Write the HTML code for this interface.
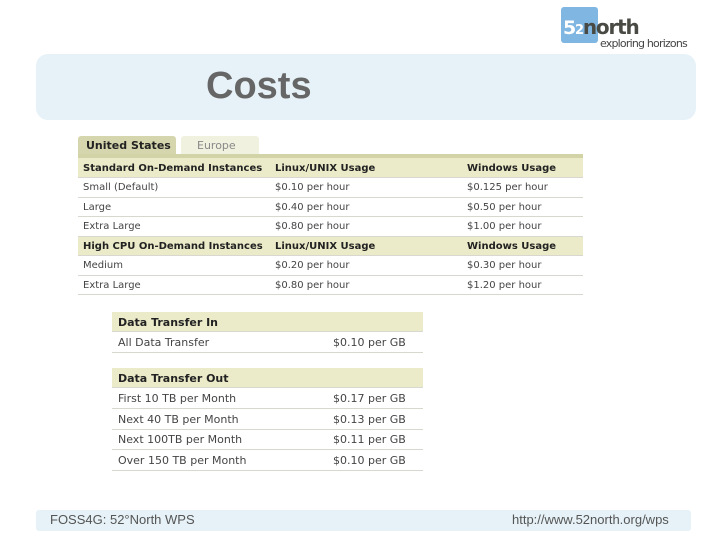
<!DOCTYPE html>
<html><head><meta charset="utf-8"><style>
*{margin:0;padding:0;box-sizing:border-box}
body{width:720px;height:540px;background:#fff;position:relative;overflow:hidden;font-family:"DejaVu Sans",Verdana,sans-serif}
.abs{position:absolute}
.band{background:#e6f2f7}
.t{position:absolute;font-size:10px;color:#444;white-space:nowrap}
.r{position:absolute;border-bottom:1px solid #d8d8d0}
.h{background:#ecebc9}
.b{font-weight:bold;color:#222}
</style></head><body>
<div class="abs" style="left:561px;top:7px;width:37px;height:36px;background:#7fb6e2;border-radius:3px"></div>
<div class="abs" style="left:563px;top:15px;font:bold 19px 'DejaVu Sans',sans-serif;color:#fff;letter-spacing:-1.2px">5<span style="font-size:13px">2</span><span style="color:#4a4a44;font-size:20px">north</span></div>
<div class="abs" style="left:600px;top:37px;font:11px 'DejaVu Sans',sans-serif;color:#444;letter-spacing:-0.8px">exploring horizons</div>

<div class="abs band" style="left:36px;top:54px;width:660px;height:66px;border-radius:12px"></div>
<div class="abs" style="left:206px;top:65px;font:bold 38px 'Liberation Sans',sans-serif;color:#666">Costs</div>

<div class="abs" style="left:78px;top:136px;width:98px;height:20px;background:#d6d6ae;border-radius:3px 3px 0 0"></div>
<div class="t b" style="left:86px;top:139px;font-size:11px">United States</div>
<div class="abs" style="left:181px;top:136px;width:78px;height:20px;background:#f1f1df;border-radius:3px 3px 0 0"></div>
<div class="t" style="left:197px;top:139px;font-size:11px;color:#888">Europe</div>
<div class="abs" style="left:78px;top:154px;width:505px;height:4px;background:#d3d3a8"></div>

<div class="r h" style="left:78px;top:158px;width:505px;height:20px"></div>
<div class="r" style="left:78px;top:178px;width:505px;height:19.5px"></div>
<div class="r" style="left:78px;top:197.5px;width:505px;height:19.5px"></div>
<div class="r" style="left:78px;top:217px;width:505px;height:19.5px"></div>
<div class="r h" style="left:78px;top:236.5px;width:505px;height:19.5px"></div>
<div class="r" style="left:78px;top:256px;width:505px;height:19.5px"></div>
<div class="r" style="left:78px;top:275.5px;width:505px;height:19.5px"></div>

<div class="t b" style="left:83px;top:163px">Standard On-Demand Instances</div>
<div class="t b" style="left:275px;top:163px">Linux/UNIX Usage</div>
<div class="t b" style="left:467px;top:163px">Windows Usage</div>
<div class="t" style="left:83px;top:182px">Small (Default)</div><div class="t" style="left:275px;top:182px">$0.10 per hour</div><div class="t" style="left:467px;top:182px">$0.125 per hour</div>
<div class="t" style="left:83px;top:202px">Large</div><div class="t" style="left:275px;top:202px">$0.40 per hour</div><div class="t" style="left:467px;top:202px">$0.50 per hour</div>
<div class="t" style="left:83px;top:221px">Extra Large</div><div class="t" style="left:275px;top:221px">$0.80 per hour</div><div class="t" style="left:467px;top:221px">$1.00 per hour</div>
<div class="t b" style="left:83px;top:241px">High CPU On-Demand Instances</div>
<div class="t b" style="left:275px;top:241px">Linux/UNIX Usage</div>
<div class="t b" style="left:467px;top:241px">Windows Usage</div>
<div class="t" style="left:83px;top:260px">Medium</div><div class="t" style="left:275px;top:260px">$0.20 per hour</div><div class="t" style="left:467px;top:260px">$0.30 per hour</div>
<div class="t" style="left:83px;top:280px">Extra Large</div><div class="t" style="left:275px;top:280px">$0.80 per hour</div><div class="t" style="left:467px;top:280px">$1.20 per hour</div>

<div class="r h" style="left:112px;top:312px;width:311px;height:20px"></div>
<div class="r" style="left:112px;top:332px;width:311px;height:21px"></div>
<div class="t b" style="left:118px;top:316px;font-size:11px">Data Transfer In</div>
<div class="t" style="left:118px;top:336px;font-size:11px">All Data Transfer</div>
<div class="t" style="left:333px;top:336px;font-size:11px">$0.10 per GB</div>

<div class="r h" style="left:112px;top:368px;width:311px;height:20px"></div>
<div class="r" style="left:112px;top:388px;width:311px;height:21px"></div>
<div class="r" style="left:112px;top:409px;width:311px;height:20.5px"></div>
<div class="r" style="left:112px;top:429.5px;width:311px;height:20.5px"></div>
<div class="r" style="left:112px;top:450px;width:311px;height:21px"></div>
<div class="t b" style="left:118px;top:372px;font-size:11px">Data Transfer Out</div>
<div class="t" style="left:118px;top:392px;font-size:11px">First 10 TB per Month</div><div class="t" style="left:333px;top:392px;font-size:11px">$0.17 per GB</div>
<div class="t" style="left:118px;top:413px;font-size:11px">Next 40 TB per Month</div><div class="t" style="left:333px;top:413px;font-size:11px">$0.13 per GB</div>
<div class="t" style="left:118px;top:433px;font-size:11px">Next 100TB per Month</div><div class="t" style="left:333px;top:433px;font-size:11px">$0.11 per GB</div>
<div class="t" style="left:118px;top:454px;font-size:11px">Over 150 TB per Month</div><div class="t" style="left:333px;top:454px;font-size:11px">$0.10 per GB</div>

<div class="abs band" style="left:36px;top:510px;width:655px;height:21px;border-radius:3px"></div>
<div class="abs" style="left:50px;top:512px;font:13px 'Liberation Sans',sans-serif;color:#555">FOSS4G: 52°North WPS</div>
<div class="abs" style="left:512px;top:512px;font:13px 'Liberation Sans',sans-serif;color:#555">http://www.52north.org/wps</div>
</body></html>
